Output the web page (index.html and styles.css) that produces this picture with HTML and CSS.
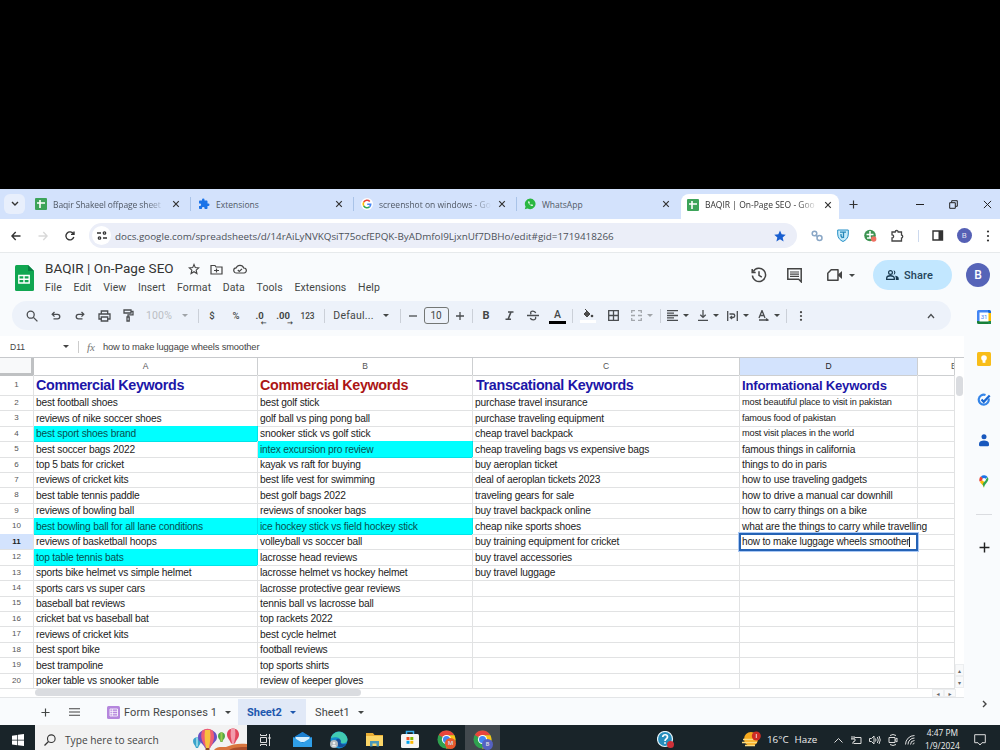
FILE: index.html
```html
<!DOCTYPE html>
<html lang="en">
	<head>
		<meta charset="UTF-8" />
		<title>BAQIR | On-Page SEO - Google Sheets</title>
		<link rel="stylesheet" href="styles.css">
	</head>
	<body>
		<!-- shared icons -->
		<svg class="defs">
			<symbol id="x" viewBox="0 0 10 10"><path d="M1.5 1.5l7 7M8.5 1.5l-7 7" stroke="currentColor" stroke-width="1.5" fill="none" /></symbol>
			<symbol id="plus" viewBox="0 0 10 10"><path d="M5 .5v9M.5 5h9" stroke="currentColor" stroke-width="1.3" fill="none" /></symbol>
			<symbol id="caret" viewBox="0 0 6 3"><path d="M0 0h6L3 3z" fill="currentColor" /></symbol>
			<symbol id="sheet" viewBox="0 0 12 12"><rect width="12" height="12" rx="1" fill="#3da45a" /><path d="M5 2v8M2 5h8" stroke="#fff" stroke-width="1.6" /></symbol>
			<symbol id="puzzle" viewBox="0 0 24 24"><path d="M20.5 11H19V7c0-1.1-.9-2-2-2h-4V3.500a2.500 2.500 0 0 0-5 0V5H4c-1.100 0-2 .9-2 2v3.800h1.500a2.700 2.700 0 0 1 0 5.400H2V20c0 1.100.9 2 2 2h3.800v-1.500a2.700 2.700 0 0 1 5.400 0V22H17c1.100 0 2-.9 2-2v-4h1.500a2.500 2.500 0 0 0 0-5z" /></symbol>
			<symbol id="chrome" viewBox="0 0 20 20">
				<circle cx="10" cy="10" r="9.500" fill="#2fa14f" />
				<path d="M10 10L1.800 5.200A9.500 9.500 0 0 1 18.300 5.500H10z" fill="#e8453c" />
				<path d="M18.300 5.500A9.500 9.500 0 0 1 9.500 19.500L14 12 10 5.500z" fill="#fbc116" />
				<circle cx="10" cy="10" r="4.800" fill="#fff" /><circle cx="10" cy="10" r="3.700" fill="#4285f4" />
			</symbol>
		</svg>

		<div class="blank"></div>

		<!-- browser tabs -->
		<div class="tabs">
			<div class="tab-search"><svg width="8" height="6" viewBox="0 0 8 6"><path d="M1 1l3 3 3-3" fill="none" stroke="#333" stroke-width="1.400" /></svg></div>
			<div class="tab"><svg width="12" height="12"><use href="#sheet" /></svg><span class="tab-name t1">Baqir Shakeel offpage sheet</span><svg class="close"><use href="#x" /></svg></div>
			<div class="tab"><svg width="12" height="12" fill="#1a73e8"><use href="#puzzle" /></svg><span class="tab-name t2">Extensions</span><svg class="close"><use href="#x" /></svg></div>
			<div class="tab"><svg width="12" height="12" viewBox="0 0 12 12"><circle cx="6" cy="6" r="6" fill="#fff" /><g fill="none" stroke-width="1.600"><path d="M8.800 3.500A3.800 3.800 0 0 0 2.700 4.200" stroke="#ea4335" /><path d="M2.700 4.200a3.800 3.800 0 0 0 0 3.600" stroke="#fbbc05" /><path d="M2.700 7.800a3.800 3.800 0 0 0 5.800 1" stroke="#34a853" /><path d="M8.500 8.800A3.800 3.800 0 0 0 9.700 6.200H6.200" stroke="#4285f4" /></g></svg><span class="tab-name t3">screenshot on windows - Go</span><svg class="close"><use href="#x" /></svg></div>
			<div class="tab last"><svg width="12" height="12" viewBox="0 0 12 12"><path d="M6.200.6a5.300 5.300 0 1 1-2.600 9.900L.8 11.300l.8-2.700A5.300 5.300 0 0 1 6.200.6z" fill="#2bb741" /><path d="M4.300 3.500c-.9 1.200 2.600 5 4.200 4.400.6-.4.500-1 .2-1.200l-1-.4-.7.600C6 6.500 5.600 5.900 5.300 5.300l.5-.6-.5-1.300c-.4-.2-.8 0-1 .100z" fill="#fff" /></svg><span class="tab-name t4">WhatsApp</span><svg class="close"><use href="#x" /></svg></div>
			<div class="tab active"><svg width="12" height="12"><use href="#sheet" /></svg><span class="tab-name t5">BAQIR | On-Page SEO - Goo</span><svg class="close"><use href="#x" /></svg></div>
			<svg class="new-tab" width="9" height="9"><use href="#plus" /></svg>
			<div class="window-buttons">
				<svg width="8" height="9" viewBox="0 0 8 9"><path d="M0 4.500h8" stroke="#222" /></svg>
				<svg width="9" height="9" viewBox="0 0 9 9" fill="none" stroke="#222"><path d="M.7 2.700h5.600v5.600H.7zM2.700 2.500V.7h5.600v5.600H6.500" /></svg>
				<svg width="9" height="9" viewBox="0 0 10 10"><path d="M1 1l8 8M9 1L1 9" stroke="#222" stroke-width="1.100" /></svg>
			</div>
		</div>

		<!-- address bar -->
		<div class="address-bar">
			<svg class="nav" width="10" height="10" viewBox="0 0 10 10"><path d="M9.500 5H1M4.700 1L.9 5l3.800 4" /></svg>
			<svg class="nav off" width="10" height="10" viewBox="0 0 10 10"><path d="M.5 5H9M5.300 1l3.800 4-3.800 4" /></svg>
			<svg class="nav" width="10" height="10" viewBox="0 0 10 10"><path d="M8.800 6A4 4 0 1 1 8.300 2.700M9 .4v3H6" /></svg>
			<div class="omnibox">
				<div class="site"><svg width="10" height="9" viewBox="0 0 10 9" fill="none" stroke="#333" stroke-width="1.300"><path d="M0 2h4M6 7h4" /><circle cx="7.500" cy="2" r="1.200" /><circle cx="2.500" cy="7" r="1.200" /></svg></div>
				<span class="url">docs.google.com/spreadsheets/d/14rAiLyNVKQsiT75ocfEPQK-ByADmfoI9LjxnUf7DBHo/edit#gid=1719418266</span>
				<svg width="12" height="12" viewBox="0 0 24 24"><path d="M12 1l3.300 7.600 8.200.700-6.200 5.500 1.900 8.200-7.200-4.300L4.800 23l1.900-8.200L.5 9.300l8.200-.700z" fill="#1a5fd0" /></svg>
			</div>
			<div class="extensions">
				<svg width="12" height="12" viewBox="0 0 12 12" fill="none" stroke="#8aa7c6" stroke-width="1.500"><circle cx="3.500" cy="3.500" r="2.300" /><circle cx="8.500" cy="8" r="2.500" /><path d="M4 5l3 2" /></svg>
				<svg width="12" height="13" viewBox="0 0 12 13"><path d="M.7 1h10.600v4c0 4-2.500 6.300-5.300 7.500C3.200 11.300.7 9 .7 5z" fill="#c6ebfa" stroke="#258fc6" /><path d="M3 3.200h6M6.500 3.500v5.500M4 5v2l1.500 2" fill="none" stroke="#2587b9" stroke-width="1.300" /></svg>
				<svg width="13" height="13" viewBox="0 0 13 13"><circle cx="6" cy="6.500" r="5.800" fill="#3b9351" /><path d="M6 2v7M2.500 5.500h7M3 9h4" stroke="#fff" stroke-width="1.500" /><circle cx="9.700" cy="10" r="2.700" fill="#ef6f61" /></svg>
				<svg width="13" height="13" viewBox="0 0 13 13"><path d="M1 3h3.200a1.500 1.500 0 0 1 3 0h3.300v3a1.600 1.600 0 0 1 0 3.100V12H1V9a1.600 1.600 0 0 0 0-3.200z" fill="none" stroke="#444" stroke-width="1.300" /></svg>
				<i></i>
				<svg class="panel-icon" width="12" height="11" viewBox="0 0 12 11"><path d="M1 1h9.500v9H1z" fill="none" stroke="#333" stroke-width="1.400" /><path d="M6.500 1h4v9h-4z" fill="#333" /></svg>
				<span class="small-avatar">B</span>
				<svg width="4" height="12" viewBox="0 0 4 12" fill="#333"><circle cx="2" cy="1.500" r="1.100" /><circle cx="2" cy="6" r="1.100" /><circle cx="2" cy="10.500" r="1.100" /></svg>
			</div>
		</div>

		<!-- document header -->
		<div class="doc-header">
			<svg class="logo" width="19" height="26" viewBox="0 0 19 26"><path d="M1.500 0H13l6 6v18.500q0 1.500-1.500 1.500h-16Q0 26 0 24.500v-23Q0 0 1.500 0z" fill="#10a651" /><path d="M13 0l6 6h-6z" fill="#078043" /><path d="M3.800 10.500h10.400v7.500H3.800zM9 10.500V18M3.800 14.200h10.400" fill="none" stroke="#fff" stroke-width="1.400" /></svg>
			<div class="doc-info">
				<div class="doc-title">
					<span>BAQIR | On-Page SEO</span>
					<svg width="12" height="12" viewBox="0 0 24 24"><path d="M12 3l2.600 6.200 6.900.600-5.200 4.500 1.600 6.700-5.900-3.600L6.100 21l1.600-6.700-5.200-4.500 6.900-.600z" fill="none" stroke="#444" stroke-width="2.200" /></svg>
					<svg width="13" height="11" viewBox="0 0 13 11" fill="none" stroke="#444" stroke-width="1.200"><path d="M1 1.500h4L6 3h6v7H1z" /><path d="M4 6.500h5M6.500 4.500v4" /></svg>
					<svg width="14" height="10" viewBox="0 0 14 10" fill="none" stroke="#444" stroke-width="1.200"><path d="M3.500 9a2.600 2.600 0 0 1-.3-5.200A4 4 0 0 1 10.700 4 2.500 2.500 0 0 1 11 9z" /><path d="M4.800 6l1.500 1.500L9 4.800" /></svg>
				</div>
				<div class="menu"><span>File</span><span>Edit</span><span>View</span><span>Insert</span><span>Format</span><span>Data</span><span>Tools</span><span>Extensions</span><span>Help</span></div>
			</div>
			<div class="doc-actions">
				<svg width="16" height="16" viewBox="0 0 16 16" fill="none" stroke="#444" stroke-width="1.500"><path d="M2.300 4.500A6.600 6.600 0 1 1 1.400 8.500M1.200 2v3.500h3.500M8 4.200v4.200l2.800 1.700" /></svg>
				<svg width="15" height="15" viewBox="0 0 15 15" fill="none" stroke="#444" stroke-width="1.500"><path d="M.8.8h13.400v13l-2.500-2.500H.8z" /><path d="M3 4h9M3 6.200h9M3 8.400h9" stroke-width="1.200" /></svg>
				<div class="meet"><svg width="15" height="12" viewBox="0 0 15 12"><path d="M4.200.8H11v10.400H.8v-7z" fill="none" stroke="#444" stroke-width="1.500" stroke-linejoin="round" /><path d="M11 5.500L15 2v8l-4-3.500z" fill="#444" /></svg><svg class="caret"><use href="#caret" /></svg></div>
				<div class="share"><svg width="13" height="10" viewBox="0 0 13 10" fill="#17384f"><circle cx="4.500" cy="2.500" r="1.900" fill="none" stroke="#17384f" stroke-width="1.200" /><path d="M.7 9.300V8c0-3 7.600-3 7.600 0v1.300z" fill="none" stroke="#17384f" stroke-width="1.300" /><path d="M7.500.2a2.400 2.400 0 0 1 0 4.700c1-1.400 1-3.300 0-4.700zM9 5.700c2 .3 3.700 1 3.700 2.500V10H9.800V8c0-1-.3-1.700-.8-2.300z" /></svg>Share</div>
				<div class="avatar">B</div>
			</div>
		</div>

		<div class="workspace">
			<div class="editor">
				<!-- toolbar -->
				<div class="toolbar">
					<svg width="12" height="12" viewBox="0 0 12 12" class="line"><circle cx="4.700" cy="4.700" r="3.500" /><path d="M7.400 7.400l4 4" /></svg>
					<svg width="10" height="9" viewBox="0 0 10 9" class="line"><path d="M3.500 1L1.200 3.300l2.300 2.300M1.500 3.300h5a2.300 2.300 0 0 1 0 4.600H2.500" /></svg>
					<svg width="10" height="9" viewBox="0 0 10 9" class="line"><path d="M6.500 1l2.300 2.300-2.300 2.300M8.500 3.300h-5a2.300 2.300 0 0 0 0 4.600h4" /></svg>
					<svg width="13" height="12" viewBox="0 0 13 12" class="line"><path d="M3.300 4V1h6.400v3M3.300 9H1V4h11v5H9.700M3.300 7h6.400v4H3.300z" /></svg>
					<svg width="12" height="13" viewBox="0 0 12 13" class="line"><path d="M2 1h7v3H2zM9 2.500h2v3.300H6V8" /><path d="M5 8h2.200v4H5z" /></svg>
					<span class="zoom">100%</span>
					<svg class="caret off"><use href="#caret" /></svg>
					<i></i>
					<b class="sign">$</b>
					<b class="sign">%</b>
					<span class="decimal">.0<em>←</em></span>
					<span class="decimal">.00<em>→</em></span>
					<span class="numbers">123</span>
					<i></i>
					<span class="font-name">Defaul...</span>
					<svg class="caret"><use href="#caret" /></svg>
					<i></i>
					<svg width="8" height="8" viewBox="0 0 8 8" class="line"><path d="M0 4h8" /></svg>
					<span class="font-size">10</span>
					<svg width="8" height="8" viewBox="0 0 8 8" class="line"><path d="M0 4h8M4 0v8" /></svg>
					<i></i>
					<b class="bold">B</b>
					<svg width="9" height="9" viewBox="0 0 9 9" class="line"><path d="M3 1h5.500M.5 8.300H6M6 1L3.200 8" stroke-width="1.600" /></svg>
					<svg width="12" height="11" viewBox="0 0 12 11" class="line"><path d="M0 5.500h12M8.700 3C8 .6 3.700.5 3.600 2.800c0 .6.200 1 .6 1.400M3.300 8c.8 2.400 5.200 2.400 5.400 0 0-.5 0-.8-.3-1.100" /></svg>
					<b class="text-color">A</b>
					<i></i>
					<svg width="16" height="16" viewBox="0 0 16 16"><path d="M5 1l2 2-3 3h6L7 3M4 6l3 3 3-3-3-3z" fill="#555" stroke="#444" /><circle cx="12" cy="8" r="1.300" fill="#444" /><path d="M0 12h16v3H0z" fill="#fff" /></svg>
					<svg width="11" height="11" viewBox="0 0 11 11" class="line"><path d="M.7.7h9.600v9.600H.7zM5.500.7v9.600M.7 5.500h9.600" /></svg>
					<div class="group off"><svg width="11" height="11" viewBox="0 0 11 11" class="line"><path d="M4 .7H.7V3M7 .7h3.300V3M4 10.300H.7V8M7 10.300h3.300V8M0 5.500h4M7 5.500h4" /></svg><svg class="caret"><use href="#caret" /></svg></div>
					<i></i>
					<div class="group"><svg width="11" height="11" viewBox="0 0 11 11" class="line"><path d="M0 .7h11M0 3.100h7M0 5.500h11M0 7.900h7M0 10.300h11" /></svg><svg class="caret"><use href="#caret" /></svg></div>
					<div class="group"><svg width="10" height="11" viewBox="0 0 10 11" class="line"><path d="M5 0v7M2.300 4.700L5 7.400l2.700-2.700M0 10.300h10" /></svg><svg class="caret"><use href="#caret" /></svg></div>
					<div class="group"><svg width="11" height="10" viewBox="0 0 11 10" class="line"><path d="M.7 0v10M10.300 0v10M2.500 3H6a1.700 1.700 0 0 1 0 3.500H3.500M5 5L3.400 6.500 5 8" /></svg><svg class="caret"><use href="#caret" /></svg></div>
					<div class="group"><svg width="11" height="11" viewBox="0 0 11 11" class="line"><path d="M1 8l3-7.500L7 8M2 5.500h4M1 10h8M8 8.500l2 1.500-2 1" /></svg><svg class="caret"><use href="#caret" /></svg></div>
					<i></i>
					<svg width="4" height="10" viewBox="0 0 4 10" fill="#444"><circle cx="2" cy="1.200" r="1.100" /><circle cx="2" cy="5" r="1.100" /><circle cx="2" cy="8.800" r="1.100" /></svg>
					<svg class="collapse line" width="8" height="6" viewBox="0 0 8 6"><path d="M1 5l3-3.500L7 5" /></svg>
				</div>

				<!-- formula bar -->
				<div class="formula-bar">
					<span class="cell-name">D11</span>
					<svg class="caret"><use href="#caret" /></svg>
					<i></i>
					<span class="fx">fx</span>
					<span class="formula">how to make luggage wheels smoother</span>
				</div>

				<!-- cells -->
				<div class="grid">
					<div class="row head"><div class="corner"></div><div>A</div><div>B</div><div>C</div><div class="selected">D</div><div class="cut">E</div></div>
					<div class="row title"><div>1</div><div>Commercial Keywords</div><div class="red">Commercial Keywords</div><div class="c-title">Transcational Keywords</div><div class="d-title">Informational Keywords</div><div></div></div>
					<div class="row"><div>2</div><div>best football shoes</div><div>best golf stick</div><div>purchase travel insurance</div><div class="small">most beautiful place to visit in pakistan</div><div></div></div>
					<div class="row"><div>3</div><div>reviews of nike soccer shoes</div><div>golf ball vs ping pong ball</div><div>purchase traveling equipment</div><div class="small">famous food of pakistan</div><div></div></div>
					<div class="row"><div>4</div><div class="cyan">best sport shoes brand</div><div>snooker stick vs golf stick</div><div>cheap travel backpack</div><div class="small">most visit places in the world</div><div></div></div>
					<div class="row"><div>5</div><div>best soccer bags 2022</div><div class="cyan">intex excursion pro review</div><div>cheap traveling bags vs expensive bags</div><div>famous things in california</div><div></div></div>
					<div class="row"><div>6</div><div>top 5 bats for cricket</div><div>kayak vs raft for buying</div><div>buy aeroplan ticket</div><div>things to do in paris</div><div></div></div>
					<div class="row"><div>7</div><div>reviews of cricket kits</div><div>best life vest for swimming</div><div>deal of aeroplan tickets 2023</div><div>how to use traveling gadgets</div><div></div></div>
					<div class="row"><div>8</div><div>best table tennis paddle</div><div>best golf bags 2022</div><div>traveling gears for sale</div><div>how to drive a manual car downhill</div><div></div></div>
					<div class="row"><div>9</div><div>reviews of bowling ball</div><div>reviews of snooker bags</div><div>buy travel backpack online</div><div>how to carry things on a bike</div><div></div></div>
					<div class="row"><div>10</div><div class="cyan">best bowling ball for all lane conditions</div><div class="cyan">ice hockey stick vs field hockey stick</div><div>cheap nike sports shoes</div><div class="spill">what are the things to carry while travelling</div><div></div></div>
					<div class="row"><div class="selected">11</div><div>reviews of basketball hoops</div><div>volleyball vs soccer ball</div><div>buy training equipment for cricket</div><div class="editing">how to make luggage wheels smoother</div><div></div></div>
					<div class="row"><div>12</div><div class="cyan">top table tennis bats</div><div>lacrosse head reviews</div><div>buy travel accessories</div><div></div><div></div></div>
					<div class="row"><div>13</div><div>sports bike helmet vs simple helmet</div><div>lacrosse helmet vs hockey helmet</div><div>buy travel luggage</div><div></div><div></div></div>
					<div class="row"><div>14</div><div>sports cars vs super cars</div><div>lacrosse protective gear reviews</div><div></div><div></div><div></div></div>
					<div class="row"><div>15</div><div>baseball bat reviews</div><div>tennis ball vs lacrosse ball</div><div></div><div></div><div></div></div>
					<div class="row"><div>16</div><div>cricket bat vs baseball bat</div><div>top rackets 2022</div><div></div><div></div><div></div></div>
					<div class="row"><div>17</div><div>reviews of cricket kits</div><div>best cycle helmet</div><div></div><div></div><div></div></div>
					<div class="row"><div>18</div><div>best sport bike</div><div>football reviews</div><div></div><div></div><div></div></div>
					<div class="row"><div>19</div><div>best trampoline</div><div>top sports shirts</div><div></div><div></div><div></div></div>
					<div class="row"><div>20</div><div>poker table vs snooker table</div><div>review of keeper gloves</div><div></div><div></div><div></div></div>
					<div class="v-scroll"><div class="v-thumb"></div><span>▴</span><span>▾</span></div>
					<div class="h-scroll"><div class="h-thumb"></div><span>◂</span><span>▸</span></div>
				</div>
			</div>

			<!-- side panel -->
			<div class="side">
				<svg width="14" height="14" viewBox="0 0 14 14"><path d="M0 1.500Q0 0 1.500 0H11v3H3v8H0z" fill="#4285f4" /><path d="M11 0h1.500Q14 0 14 1.500V3h-3z" fill="#1967d2" /><path d="M11 3h3v8h-3z" fill="#fbbc04" /><path d="M3 11h8v3H1.500Q0 14 0 12.500V11z" fill="#188038" /><path d="M11 11h3v3h-3z" fill="#1c8a4a" /><path d="M2.500 2.500h9v9h-9z" fill="#fff" /><text x="3.700" y="9.300" font-size="6" fill="#4285f4" font-family="Roboto">31</text></svg>
				<svg width="14" height="14" viewBox="0 0 14 14"><rect width="14" height="14" rx="1.500" fill="#f8bd19" /><circle cx="7" cy="6" r="2.800" fill="#fff" /><path d="M5.600 8h2.800v2.800H5.600z" fill="#fff" /></svg>
				<svg width="14" height="13" viewBox="0 0 14 13" fill="none"><path d="M11.600 5.500A5 5 0 1 1 8.500 2" stroke="#3585e8" stroke-width="2.200" /><path d="M4.500 6.500l2.200 2.300 6-6.300" stroke="#1967d2" stroke-width="2.200" /></svg>
				<svg width="10" height="13" viewBox="0 0 10 13" fill="#1958bd"><circle cx="5" cy="2.700" r="2.500" /><path d="M0 11V9.500C0 5.500 10 5.500 10 9.500V11q0 1.200-1.200 1.200H1.200Q0 12.200 0 11z" /></svg>
				<svg width="10" height="13" viewBox="0 0 10 13"><path d="M5 12.800c-.5-2.800-3.200-4-4.200-6L5 4.500z" fill="#fbbc04" /><path d="M.6 6.500A4.700 4.700 0 0 1 2 1.300L5 4.800z" fill="#ea4335" /><path d="M2 1.300A4.600 4.600 0 0 1 8.600 1.900L5 5z" fill="#1a73e8" /><path d="M8.600 1.900c2.800 4-2.800 6-3.600 10.900L3.600 9 8 3z" fill="#34a853" /><circle cx="5" cy="4.800" r="1.700" fill="#fff" /></svg>
				<hr>
				<svg width="11" height="11"><use href="#plus" /></svg>
				<svg class="hide-side" width="5" height="8" viewBox="0 0 5 8"><path d="M1 1l3 3-3 3" fill="none" stroke="#444" stroke-width="1.400" /></svg>
			</div>
		</div>

		<!-- sheet tabs -->
		<div class="sheet-tabs">
			<svg class="add" width="9" height="9"><use href="#plus" /></svg>
			<svg class="all" width="11" height="8" viewBox="0 0 11 8"><path d="M0 .7h11M0 4h11M0 7.300h11" stroke="#444" stroke-width="1.100" /></svg>
			<div class="sheet-tab form"><svg width="13" height="13" viewBox="0 0 13 13"><rect width="13" height="13" rx="1.500" fill="#b586dd" /><path d="M3 3h7.500v7H3zM3 5.300h7.500M3 7.700h7.500M5.300 3v7" fill="none" stroke="#fff" stroke-width=".8" /></svg><span>Form Responses 1</span><svg class="caret"><use href="#caret" /></svg></div>
			<div class="sheet-tab current"><span>Sheet2</span><svg class="caret"><use href="#caret" /></svg></div>
			<div class="sheet-tab"><span>Sheet1</span><svg class="caret"><use href="#caret" /></svg></div>
		</div>

		<!-- taskbar -->
		<div class="taskbar">
			<svg class="start" width="12" height="12" viewBox="0 0 12 12"><path d="M0 1.700l5.300-.8v4.800H0zM6 .8L12 0v5.700H6zM0 6.400h5.300v4.800L0 10.400zM6 6.400h6V12l-6-.8z" fill="#fff" /></svg>
			<div class="search">
				<svg width="12" height="12" viewBox="0 0 12 12"><circle cx="7.300" cy="4.700" r="3.800" fill="none" stroke="#333" stroke-width="1.100" /><path d="M4.500 7.500L.5 11.500" stroke="#333" stroke-width="1.200" /></svg>
				<span>Type here to search</span>
				<svg width="54" height="24" viewBox="0 0 54 24">
					<path d="M20 24c2-6 8-5 13-5 6-3 14-4 21-3v8z" fill="#d9763e" /><path d="M34 24c4-5 12-5 20-5v5z" fill="#a94e2b" />
					<path d="M0 13c0-5 8-5 8 0 0 3-2 4-3 7H3c-1-3-3-4-3-7z" fill="#3aa3cb" /><path d="M3 9.500h2v9H3z" fill="#8cd3e3" />
					<path d="M5 9c0-10 19-10 19 0 0 5-5 6-7 11h-5C10 15 5 14 5 9z" fill="#6b4fc2" /><path d="M9 3c-2 6 0 11 4 17h4c4-6 5-11 3-17-3-3-8-3-11 0z" fill="#ee5d74" /><path d="M12 2c-1 7 0 12 1 18h3c1-6 2-11 1-18z" fill="#f8c13e" /><path d="M12.500 20h4v3h-4z" fill="#8a4a25" />
					<path d="M25 8c0-5 7-5 7 0 0 3-2 3-2.500 6h-2C27 11 25 11 25 8z" fill="#55a844" /><path d="M27.500 4.500h2v9h-2z" fill="#9ccc4f" />
					<path d="M34 6.500c0-8 12-8 12 0 0 4-3 5-4 9h-4c-1-4-4-5-4-9z" fill="#e2475d" /><path d="M38 1c-1 5 0 10 1 14h2c1-4 2-9 1-14z" fill="#f29cac" />
				</svg>
			</div>
			<svg class="task-view" width="13" height="12" viewBox="0 0 13 12" fill="none" stroke="#ddd"><path d="M1.500 3.500h6v5h-6zM1.500 0v1.500h6V0M1.500 12v-1.500h6V12M10.500 0v12M9 4h3" /></svg>
			<div class="apps">
				<svg width="19" height="17" viewBox="0 0 19 17"><path d="M0 7l9.500-6L19 7v9H0z" fill="#1269b5" /><path d="M2 5.500L9.500 1 17 5.500V12H2z" fill="#1b7fd0" /><path d="M2.500 6h14v5h-14z" fill="#d5efff" /><path d="M0 6l9.500 6L19 6v10H0z" fill="#2f9fe8" /></svg>
				<svg width="18" height="18" viewBox="0 0 18 18"><circle cx="9" cy="9" r="8.500" fill="#158bd0" /><path d="M1 7C3-1 15-2 17.500 8c0 5-6 5-7 3 1-4-4-6-9.500-4z" fill="#42cbb1" /><path d="M6 9c2-3 6 0 4.500 2.500.500 2 4 2.500 6 1-3 6-11 5-10.500-3.500z" fill="#164f9c" /><circle cx="4" cy="13" r="4" fill="#b2b8bd" /><circle cx="4" cy="12" r="1.300" fill="#eee" /><path d="M1.800 15.500c0-2.500 4.400-2.500 4.400 0z" fill="#eee" /></svg>
				<svg width="17" height="15" viewBox="0 0 17 15"><path d="M0 1h7l1.500 2H17v11H0z" fill="#e9ae35" /><path d="M0 4h17v10H0z" fill="#fbd667" /><path d="M4 9h9v5.500h-2.500V11.500h-4v3H4z" fill="#4a98b8" /></svg>
				<svg width="18" height="19" viewBox="0 0 18 19"><path d="M5.500 5V1.500h7V5" fill="none" stroke="#36aef0" stroke-width="1.500" /><rect y="4" width="18" height="14" rx="1.500" fill="#f5f5f5" /><path d="M5.500 7h3v3h-3z" fill="#f25022" /><path d="M9.300 7h3v3h-3z" fill="#7fba00" /><path d="M5.500 10.800h3v3h-3z" fill="#00a4ef" /><path d="M9.300 10.800h3v3h-3z" fill="#ffb900" /></svg>
				<div class="app"><svg width="19" height="19"><use href="#chrome" /></svg><b class="badge orange">M</b></div>
				<div class="app open"><svg width="19" height="19"><use href="#chrome" /></svg><b class="badge">B</b></div>
			</div>
			<svg class="help" width="18" height="18" viewBox="0 0 18 18"><circle cx="8" cy="8" r="7.500" fill="#268ebd" stroke="#e8f5fa" stroke-width="1.200" /><path d="M5.700 6C6 3 10.500 3 10.500 6c0 1.800-2.500 2-2.500 4M8 11.300v1.500" fill="none" stroke="#fff" stroke-width="1.700" /><circle cx="13.500" cy="13.500" r="3.500" fill="#cf3038" /></svg>
			<svg class="weather" width="19" height="17" viewBox="0 0 19 17"><circle cx="9" cy="8" r="7" fill="#f6a91d" /><path d="M1 8.500h14M0 11.500h15M3 14.500h10" stroke="#fbdc80" stroke-width="1.600" /><circle cx="14.300" cy="5" r="4.500" fill="#cf2d25" /><path d="M14.300 3v4" stroke="#fff" stroke-width=".8" /></svg>
			<span class="degrees">16°C</span><span class="haze">Haze</span>
			<div class="tray">
				<svg width="9" height="6" viewBox="0 0 9 6"><path d="M.5 5.500l4-4 4 4" /></svg>
				<svg width="12" height="10" viewBox="0 0 12 10"><path d="M4.500 2.500H11v6H4M2 1v3M4 1v3M1 4h4v2L3 7v2" /></svg>
				<svg width="12" height="10" viewBox="0 0 12 10"><path d="M.5 3.500h2L5 1v8L2.500 6.500h-2zM6.500 3.500q1 1.500 0 3M8.300 2q2 3 0 6M10 1q2.500 4 0 8" /></svg>
				<svg width="10" height="12" viewBox="0 0 10 12"><path d="M1 3.500h6v5H1zM7 5.500l2-1.500v4L7 6.500M2 1.500Q5-.5 8 1.500M2 10.500q3 2 6 0" /></svg>
				<svg width="10" height="10" viewBox="0 0 10 10"><path d="M.5 9.500a9 9 0 0 1 9-9M3 9.500A6.500 6.500 0 0 1 9.500 3M5.500 9.500a4 4 0 0 1 4-4M8 9.500a1.500 1.500 0 0 1 1.500-1.500" /></svg>
			</div>
			<div class="clock">4:47 PM<br>1/9/2024</div>
			<svg width="12" height="12" viewBox="0 0 12 12" fill="none" stroke="#ddd"><path d="M.7.7h10.600v8H8L6 11 4 8.700H.7z" /></svg>
		</div>
	</body>
</html>
```

FILE: styles.css
```css
* {
	box-sizing: border-box;
}
body {
	margin: 0;
	width: 1000px;
	height: 750px;
	overflow: hidden;
	background: #f9fbfd;
	font-family: Roboto, sans-serif;
	color: #444746;
}
svg {
	display: block;
	flex: none;
}
.defs {
	display: none;
}
.blank {
	height: 189px;
	background: #000;
}
.caret {
	width: 6px;
	height: 3px;
}

/* browser tabs */
.tabs {
	display: flex;
	align-items: center;
	height: 30px;
	background: #d3e2fc;
	font: 8.5px "Open Sans", sans-serif;
	color: #505864;
}
.tab-search {
	display: flex;
	align-items: center;
	justify-content: center;
	width: 21px;
	height: 20px;
	margin: 0 3px 0 4px;
	border-radius: 6px;
	background: #e8effc;
}
.tab {
	display: flex;
	align-items: center;
	width: 163px;
	height: 14px;
	padding: 0 10px 0 7px;
	border-right: 1px solid #a9c3e8;
}
.tab.last {
	border: none;
}
.tab-name {
	flex: 1;
	margin: 0 6px;
	white-space: nowrap;
}
.t1 {
	letter-spacing: -0.1px;
}
.t1,
.t3,
.t5 {
	-webkit-mask-image: linear-gradient(90deg, #000 82%, transparent);
}
.close {
	width: 8px;
	height: 8px;
	color: #333;
}
.tab.active {
	align-self: flex-end;
	width: 158px;
	height: 25px;
	margin-left: 1px;
	padding: 0 7px 4px 6px;
	border: none;
	border-radius: 8px 8px 0 0;
	background: #fff;
	color: #333;
}
.new-tab {
	margin-left: 10px;
	color: #333;
}
.window-buttons {
	display: flex;
	gap: 25px;
	margin-left: auto;
	padding-right: 8px;
}

/* address bar */
.address-bar {
	display: flex;
	align-items: center;
	height: 34px;
	padding-left: 11px;
	background: #fff;
	border-bottom: 1px solid #e7eaec;
}
.nav {
	margin-right: 17px;
	fill: none;
	stroke: #333;
	stroke-width: 1.4;
}
.nav.off {
	stroke: #aaa;
}
.omnibox {
	display: flex;
	align-items: center;
	width: 708px;
	height: 25px;
	margin-left: -3px;
	padding: 0 11px 0 3px;
	border-radius: 13px;
	background: #ebeef8;
}
.site {
	display: flex;
	align-items: center;
	justify-content: center;
	width: 19px;
	height: 19px;
	border-radius: 50%;
	background: #fff;
}
.url {
	flex: 1;
	margin-left: 4px;
	font: 9.85px "Open Sans", sans-serif;
	color: #4b5159;
	white-space: nowrap;
}
.extensions {
	display: flex;
	flex: 1;
	align-items: center;
	justify-content: space-between;
	padding: 0 10px 0 14px;
}
.extensions i {
	width: 1px;
	height: 12px;
	background: #ccd9ee;
}
.panel-icon {
	margin: 0 -2px 0 -1px;
}
.small-avatar {
	width: 15px;
	height: 15px;
	border-radius: 50%;
	background: #5560b5;
	color: #dde;
	font-size: 8px;
	line-height: 15px;
	text-align: center;
}

/* document header */
.doc-header {
	display: flex;
	height: 48px;
}
.logo {
	margin: 12px 0 0 15px;
}
.doc-info {
	margin-left: 11px;
	padding-top: 7px;
}
.doc-title {
	display: flex;
	align-items: center;
	gap: 10px;
	height: 18px;
	font-size: 13.5px;
	color: #333;
}
.doc-title span {
	width: 133px;
	padding-bottom: 2px;
	letter-spacing: 0.05px;
	white-space: nowrap;
}
.menu {
	display: flex;
	gap: 11.7px;
	margin-top: 2px;
	font-size: 10.5px;
	letter-spacing: 0.08px;
	line-height: 15px;
}
.doc-actions {
	display: flex;
	align-items: center;
	height: 44px;
	margin-left: auto;
	padding-right: 10px;
}
.doc-actions > svg {
	margin-right: 20px;
}
.meet {
	display: flex;
	align-items: center;
	gap: 7px;
	margin: 0 18px 0 5px;
}
.share {
	display: flex;
	align-items: center;
	gap: 5px;
	width: 79px;
	height: 30px;
	margin-right: 14px;
	padding-left: 13px;
	border-radius: 15px;
	background: #c2e7ff;
	color: #24445a;
	font-size: 11px;
	font-weight: 500;
	letter-spacing: 0.1px;
}
.avatar {
	width: 24px;
	height: 24px;
	border-radius: 50%;
	background: #5664b8;
	color: #fff;
	font-size: 12px;
	font-weight: 500;
	line-height: 24px;
	text-align: center;
}

.workspace {
	display: flex;
	height: 397px;
}
.editor {
	width: 964px;
}

/* toolbar */
.toolbar {
	display: grid;
	grid-template-columns: 25px 24px 24px 24px 23px 40px 12px 14px 14px 34px 13px 34px 15px 18px 41px 24px 4px 21px 26px 22px 2px 26px 21px 26px 23px 6px 25px 26px 32px 4px 31px 30px 30px 31px 4px 26px 1fr;
	align-items: center;
	justify-items: center;
	width: 939px;
	height: 29px;
	margin-left: 12px;
	padding: 0 16px 0 7px;
	border-radius: 15px;
	background: #edf2fa;
	white-space: nowrap;
}
.toolbar i {
	width: 1px;
	height: 14px;
	background: #cbd0d8;
}
.line {
	fill: none;
	stroke: #4a4d50;
	stroke-width: 1.3;
}
.off {
	opacity: 0.45;
}
.zoom {
	color: #bbbec4;
	font-size: 10.5px;
	letter-spacing: 0.2px;
}
.sign {
	font-size: 9.5px;
	font-weight: 500;
}
.decimal {
	position: relative;
	font-size: 9.5px;
	font-weight: 700;
	line-height: 14px;
}
.decimal em {
	position: absolute;
	right: -3px;
	bottom: -4px;
	font: 700 7px/8px "DejaVu Sans", sans-serif;
}
.numbers {
	font-size: 8.3px;
	font-weight: 500;
}
.font-name {
	font-size: 10.5px;
	letter-spacing: 0.2px;
}
.font-size {
	width: 25px;
	height: 17px;
	border: 1px solid #747775;
	border-radius: 3px;
	font-size: 10px;
	line-height: 15px;
	text-align: center;
}
.bold {
	font-size: 11px;
}
.text-color {
	width: 17px;
	border-bottom: 3px solid #000;
	font-size: 10.5px;
	font-weight: 500;
	line-height: 13px;
	text-align: center;
}
.group {
	display: flex;
	align-items: center;
	gap: 5px;
}
.collapse {
	justify-self: end;
}

/* formula bar */
.formula-bar {
	display: flex;
	align-items: center;
	height: 21px;
	margin-top: 6px;
	padding-left: 10px;
	background: #fff;
	font-size: 9px;
	color: #444;
}
.cell-name {
	width: 53px;
	font-family: "Liberation Sans", sans-serif;
	font-size: 8.5px;
}
.formula-bar i {
	width: 1px;
	height: 12px;
	margin: 0 8px 0 9px;
	background: #ccc;
}
.fx {
	width: 16px;
	font: italic 11px "Liberation Serif", serif;
	color: #777;
}
.formula {
	font: 9.3px "Liberation Sans", sans-serif;
	letter-spacing: -0.14px;
	white-space: nowrap;
}

/* cells */
.grid {
	position: relative;
	height: 341px;
	border-top: 1px solid #c7c9cc;
	background: #fff;
}
.row {
	display: grid;
	grid-template-columns: 34px 224px 215px 267px 178px 37px;
	width: 955px;
	height: 15.44px;
	font: 10.2px/15px "Liberation Sans", sans-serif;
	letter-spacing: -0.17px;
	color: #222;
}
.row div {
	padding: 0.5px 0 0 2px;
	border-right: 1px solid #e1e2e3;
	border-bottom: 1px solid #e1e2e3;
	white-space: nowrap;
}
.row div:first-child {
	padding: 0;
	font-size: 8px;
	letter-spacing: 0;
	line-height: 15px;
	text-align: center;
	color: #555;
}
.row.head {
	height: 17.2px;
}
.row.head div {
	padding: 0;
	border-color: #cdcfd1;
	font-size: 8.5px;
	line-height: 17px;
	text-align: center;
	color: #555;
}
.row.head .corner {
	border-right: 3px solid #bfc1c3;
	border-bottom: 3px solid #bfc1c3;
	background: #f8f9fa;
}
.row div.selected,
.row.head div.selected {
	background: #d3e3fd;
	color: #222;
	font-weight: 700;
}
.row.head div.selected {
	font-weight: 400;
}
.row.head .cut {
	padding-left: 33px;
	overflow: hidden;
	text-align: left;
}
.row.title {
	height: 19.6px;
	font-size: 14.3px;
	font-weight: 700;
	letter-spacing: -0.32px;
	line-height: 19px;
	color: #1c16a8;
}
.row.title div:first-child {
	font-weight: 400;
	line-height: 19px;
}
.row.title .red {
	color: #ab1515;
}
.row.title .c-title {
	padding-left: 3px;
}
.row.title .d-title {
	padding-top: 1px;
	font-size: 13.1px;
	letter-spacing: -0.2px;
}
.row .small {
	font-size: 9.2px;
}
.row .cyan {
	border-color: #00e3e8;
	background: #0ff;
	color: #075050;
}
.row .spill {
	border-right: none;
}
.row .editing {
	position: relative;
	margin: -1px 0 -1px -1px;
	padding: 0 0 0 1px;
	outline: 1px solid #a9c8f5;
	border: 2px solid #2462b5;
	background: #fff;
	font-size: 10px;
	line-height: 13px;
}
.editing::after {
	content: "";
	display: inline-block;
	width: 1px;
	height: 10px;
	background: #222;
	vertical-align: middle;
}

/* scrollbars lie over the grid edges */
.v-scroll {
	position: absolute;
	top: 0;
	right: 0;
	display: flex;
	flex-direction: column;
	align-items: center;
	width: 9px;
	height: 330px;
	background: #fff;
	font: 6px/12px "DejaVu Sans", sans-serif;
}
.v-thumb {
	width: 7px;
	height: 20px;
	margin: 18px 0 auto;
	border-radius: 4px;
	background: #dadce0;
}
.v-scroll span,
.h-scroll span {
	width: 12px;
	height: 12px;
	border: 1px solid #eceef0;
	background: #f8f9fa;
	color: #666;
	text-align: center;
}
.v-scroll span {
	width: 9px;
}
.h-scroll {
	position: absolute;
	bottom: 0;
	left: 0;
	display: flex;
	align-items: flex-start;
	width: 964px;
	height: 10px;
	padding: 1px 8px 0 35px;
	border-bottom: 1px solid #e3e5e7;
	font: 6px/7px "DejaVu Sans", sans-serif;
}
.h-scroll span {
	height: 8px;
}
.h-thumb {
	width: 326px;
	height: 7px;
	margin-right: auto;
	border-radius: 4px;
	background: #dadce0;
}

/* side panel */
.side {
	display: flex;
	flex: 1;
	flex-direction: column;
	align-items: center;
	padding: 9px 0 0 4px;
	gap: 27.7px;
}
.side hr {
	width: 16px;
	margin: -1px 0;
	border: none;
	border-top: 1px solid #dadce0;
}
.side > svg:nth-of-type(6) {
	color: #222;
}
.side .hide-side {
	margin-top: auto;
	margin-bottom: -10px;
}

/* sheet tabs */
.sheet-tabs {
	display: flex;
	align-items: center;
	height: 27px;
	padding-top: 1px;
	font-size: 11px;
	letter-spacing: 0.12px;
}
.add {
	margin-left: 41px;
}
.all {
	margin-left: 19px;
}
.sheet-tab {
	display: flex;
	align-items: center;
	gap: 8px;
	width: 68px;
	height: 100%;
	padding: 0 9px;
}
.sheet-tab.form {
	width: 131px;
	gap: 4px;
	margin-left: 27px;
	padding: 0;
}
.form .caret {
	margin-left: 4px;
}
.sheet-tab.current {
	background: #e1e9f7;
	color: #1d57ae;
	font-weight: 700;
	letter-spacing: 0;
}

/* taskbar */
.taskbar {
	display: flex;
	align-items: center;
	height: 25px;
	padding-top: 4px;
	background: #192429;
	color: #eee;
	font: 9.8px "Open Sans", sans-serif;
}
.start {
	margin-left: 12px;
}
.search {
	display: flex;
	align-items: center;
	width: 212px;
	height: 25px;
	margin: -4px 0 0 11px;
	padding: 4px 0 0 9px;
	background: #f2f2f2;
	color: #444;
	font-size: 10.2px;
	overflow: hidden;
}
.search span {
	flex: 1;
	margin-left: 9px;
	white-space: nowrap;
}
.task-view {
	margin: 0 21px 0 12px;
}
.apps {
	display: flex;
	align-items: center;
	gap: 18px;
}
.app {
	position: relative;
}
.app.open {
	display: flex;
	align-items: center;
	height: 25px;
	margin: -4px 0 0 -9px;
	padding: 4px 8px 0;
	background: #42494e;
}
.badge {
	position: absolute;
	right: 0;
	bottom: 0;
	width: 11px;
	height: 11px;
	border-radius: 50%;
	background: #5561c2;
	color: #ccd;
	font-size: 6px;
	line-height: 11px;
	text-align: center;
}
.open .badge {
	right: 7px;
}
.badge.orange {
	background: #e8582c;
}
.help {
	margin-left: 157px;
}
.weather {
	margin-left: 67px;
}
.degrees {
	margin-left: 6px;
}
.haze {
	margin-left: 6px;
}
.tray {
	display: flex;
	align-items: center;
	gap: 7px;
	margin-left: 17px;
	fill: none;
	stroke: #ddd;
}
.clock {
	width: 36px;
	margin: 0 14px 0 9px;
	font-size: 8.4px;
	line-height: 12.5px;
	text-align: center;
	white-space: nowrap;
}
```
